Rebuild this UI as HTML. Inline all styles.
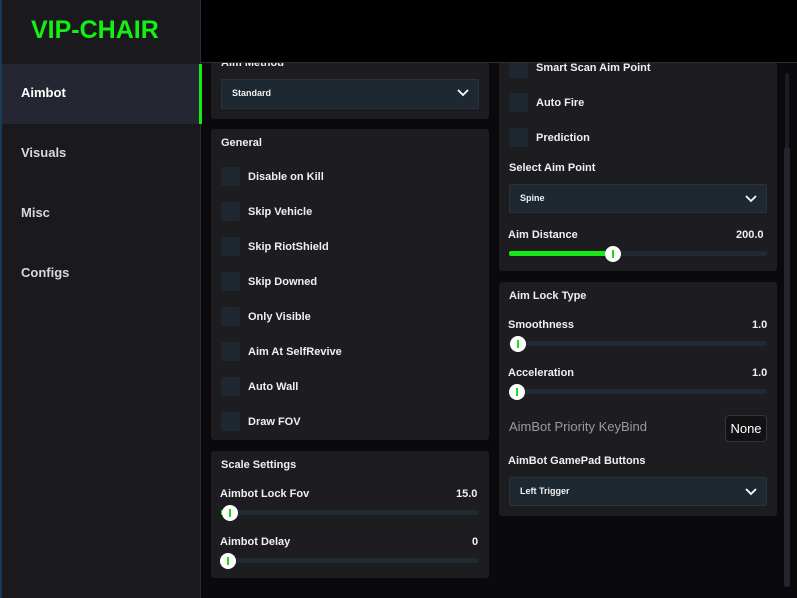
<!DOCTYPE html><html><head><style>
body{margin:0;width:797px;height:598px;background:#0a0a0c;font-family:"Liberation Sans",sans-serif;position:relative;overflow:hidden;color:#e8e8ea}
div{position:absolute;box-sizing:border-box}
.p{background:#1c1c21;border-radius:3px}
.t{font-size:11px;font-weight:bold;color:#f0f0f0;white-space:nowrap}
.cb{width:19px;height:19px;background:#1f2830;border-radius:2px}
.dd{background:#1d2830;border:1px solid #2a343c;border-radius:2px}
.tr{height:5px;background:#1f2a32;border-radius:2px}
.kn{width:16px;height:16px;border-radius:50%;background:#fff}
.kn:after{content:"";position:absolute;left:7px;top:4px;width:2px;height:8px;background:#1ed81e}
.nav{left:21px;font-size:13px;font-weight:bold;color:#d8d8da}
svg{position:absolute}
</style></head><body>
<div style="left:0;top:0;width:201px;height:598px;background:#19191e;border-right:1px solid #2c2c32"></div>
<div style="left:0;top:0;width:2px;height:598px;background:#1a3a5a"></div>
<div style="left:2px;top:64px;width:198px;height:60px;background:#242631"></div>
<div style="left:199px;top:64px;width:3px;height:60px;background:#17e817"></div>
<div class="nav" style="top:85px;color:#fff">Aimbot</div>
<div class="nav" style="top:145px">Visuals</div>
<div class="nav" style="top:205px">Misc</div>
<div class="nav" style="top:265px">Configs</div>
<div style="left:785px;top:73px;width:4px;height:510px;background:#1c1c22;border-radius:2px"></div>
<div style="left:784px;top:147px;width:6px;height:440px;background:#252530;border-radius:3px"></div>

<div class="p" style="left:211px;top:50px;width:278px;height:69px"></div>
<div class="t" style="left:221px;top:57px">Aim Method</div>
<div class="dd" style="left:221px;top:79px;width:258px;height:30px"></div>
<div class="t" style="left:232px;top:88px;font-size:9px">Standard</div>
<svg style="left:457px;top:89px" width="12" height="8"><path d="M1 1L6 6L11 1" stroke="#fff" stroke-width="1.8" fill="none"/></svg>

<div class="p" style="left:211px;top:129px;width:278px;height:311px"></div>
<div class="t" style="left:221px;top:137px">General</div>
<div class="cb" style="left:221px;top:167px"></div><div class="t" style="left:248px;top:171px">Disable on Kill</div>
<div class="cb" style="left:221px;top:202px"></div><div class="t" style="left:248px;top:206px">Skip Vehicle</div>
<div class="cb" style="left:221px;top:237px"></div><div class="t" style="left:248px;top:241px">Skip RiotShield</div>
<div class="cb" style="left:221px;top:272px"></div><div class="t" style="left:248px;top:276px">Skip Downed</div>
<div class="cb" style="left:221px;top:307px"></div><div class="t" style="left:248px;top:311px">Only Visible</div>
<div class="cb" style="left:221px;top:342px"></div><div class="t" style="left:248px;top:346px">Aim At SelfRevive</div>
<div class="cb" style="left:221px;top:377px"></div><div class="t" style="left:248px;top:381px">Auto Wall</div>
<div class="cb" style="left:221px;top:412px"></div><div class="t" style="left:248px;top:416px">Draw FOV</div>

<div class="p" style="left:211px;top:451px;width:278px;height:127px"></div>
<div class="t" style="left:221px;top:459px">Scale Settings</div>
<div class="t" style="left:220px;top:488px">Aimbot Lock Fov</div><div class="t" style="left:456px;top:488px">15.0</div>
<div class="tr" style="left:221px;top:510px;width:258px"></div>
<div style="left:221px;top:510px;width:6px;height:5px;background:#17e817"></div>
<div class="kn" style="left:222px;top:505px"></div>
<div class="t" style="left:220px;top:536px">Aimbot Delay</div><div class="t" style="left:472px;top:536px">0</div>
<div class="tr" style="left:221px;top:558px;width:258px"></div>
<div class="kn" style="left:220px;top:553px"></div>

<div class="p" style="left:499px;top:50px;width:278px;height:221px"></div>
<div class="cb" style="left:509px;top:59px"></div><div class="t" style="left:536px;top:62px">Smart Scan Aim Point</div>
<div class="cb" style="left:509px;top:93px"></div><div class="t" style="left:536px;top:97px">Auto Fire</div>
<div class="cb" style="left:509px;top:128px"></div><div class="t" style="left:536px;top:132px">Prediction</div>
<div class="t" style="left:509px;top:162px">Select Aim Point</div>
<div class="dd" style="left:509px;top:184px;width:258px;height:29px"></div>
<div class="t" style="left:520px;top:193px;font-size:9px">Spine</div>
<svg style="left:745px;top:195px" width="12" height="8"><path d="M1 1L6 6L11 1" stroke="#fff" stroke-width="1.8" fill="none"/></svg>
<div class="t" style="left:508px;top:229px">Aim Distance</div><div class="t" style="left:736px;top:229px">200.0</div>
<div class="tr" style="left:509px;top:251px;width:258px"></div>
<div style="left:509px;top:251px;width:100px;height:5px;background:#17e817;border-radius:2px"></div>
<div class="kn" style="left:605px;top:246px"></div>

<div class="p" style="left:499px;top:282px;width:278px;height:234px"></div>
<div class="t" style="left:509px;top:290px">Aim Lock Type</div>
<div class="t" style="left:508px;top:319px">Smoothness</div><div class="t" style="left:752px;top:319px">1.0</div>
<div class="tr" style="left:509px;top:341px;width:258px"></div>
<div class="kn" style="left:510px;top:336px"></div>
<div class="t" style="left:508px;top:367px">Acceleration</div><div class="t" style="left:752px;top:367px">1.0</div>
<div class="tr" style="left:509px;top:389px;width:258px"></div>
<div class="kn" style="left:509px;top:384px"></div>
<div style="left:509px;top:419px;font-size:13px;color:#9a9a9e">AimBot Priority KeyBind</div>
<div style="left:725px;top:415px;width:42px;height:27px;border:1px solid #34343a;border-radius:4px;background:#121215;font-size:13px;color:#fff;text-align:center;line-height:25px">None</div>
<div class="t" style="left:508px;top:455px">AimBot GamePad Buttons</div>
<div class="dd" style="left:509px;top:477px;width:258px;height:29px"></div>
<div class="t" style="left:520px;top:486px;font-size:9px">Left Trigger</div>
<svg style="left:745px;top:488px" width="12" height="8"><path d="M1 1L6 6L11 1" stroke="#fff" stroke-width="1.8" fill="none"/></svg>

<div style="left:201px;top:0;width:596px;height:63px;background:#000;border-bottom:1px solid #2e2e33"></div>
<div style="left:31px;top:16px;font-size:25px;font-weight:bold;color:#14f014">VIP-CHAIR</div>
</body></html>
